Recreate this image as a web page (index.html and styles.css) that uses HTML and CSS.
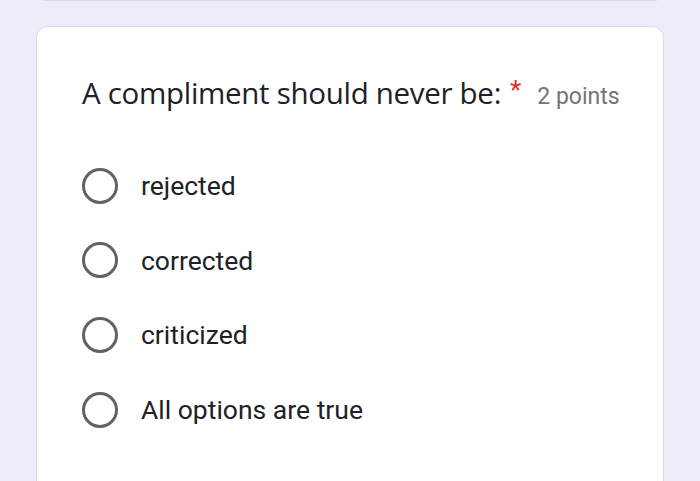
FILE: index.html
```html
<!DOCTYPE html>
<html>
<head>
<meta charset="utf-8">
<link rel="stylesheet" href="styles.css">
</head>
<body>
<div class="page">
  <div class="prev-card"></div>
  <div class="card">
    <div class="question">
      <span class="q-text">A compliment should never be:</span>
      <span class="req">*</span>
      <span class="points">2 points</span>
    </div>
    <div class="options">
      <div class="option"><span class="radio"></span><span class="label">rejected</span></div>
      <div class="option"><span class="radio"></span><span class="label">corrected</span></div>
      <div class="option"><span class="radio"></span><span class="label">criticized</span></div>
      <div class="option"><span class="radio"></span><span class="label">All options are true</span></div>
    </div>
  </div>
</div>
</body>
</html>
```
FILE: styles.css
```css
html, body {
  margin: 0;
  padding: 0;
  background: #efebf8;
  height: 100%;
  overflow: hidden;
}
.page {
  display: flex;
  flex-direction: column;
  align-items: center;
  font-family: Roboto, "Liberation Sans", sans-serif;
}
.prev-card {
  width: 628px;
  height: 10px;
  margin-top: -9px;
  background: #fff;
  border: 1px solid #dcd8e6;
  border-radius: 0 0 10px 10px;
  box-sizing: border-box;
}
.card {
  margin-top: 25px;
  width: 628px;
  height: 520px;
  background: #fff;
  border: 1px solid #dcdae2;
  border-radius: 12px;
  box-sizing: border-box;
  padding: 45px 20px 0 45px;
}
.question {
  display: flex;
  align-items: baseline;
  color: #202124;
  white-space: nowrap;
}
.q-text {
  font-family: "Open Sans", Roboto, sans-serif;
  font-size: 29.5px;
  letter-spacing: -0.3px;
}
.req {
  color: #d93025;
  font-size: 26px;
  margin-left: 9px;
  position: relative;
  top: -5px;
}
.points {
  color: #70757a;
  font-size: 23px;
  margin-left: 16px;
}
.options {
  display: flex;
  flex-direction: column;
  gap: 37.7px;
  margin-top: 54px;
}
.option {
  display: flex;
  align-items: center;
  height: 37px;
}
.radio {
  width: 30px;
  height: 30px;
  border: 3.5px solid #5f6368;
  border-radius: 50%;
  flex: none;
}
.label {
  margin-left: 23px;
  font-size: 26.5px;
  color: #202124;
  white-space: nowrap;
}
```
